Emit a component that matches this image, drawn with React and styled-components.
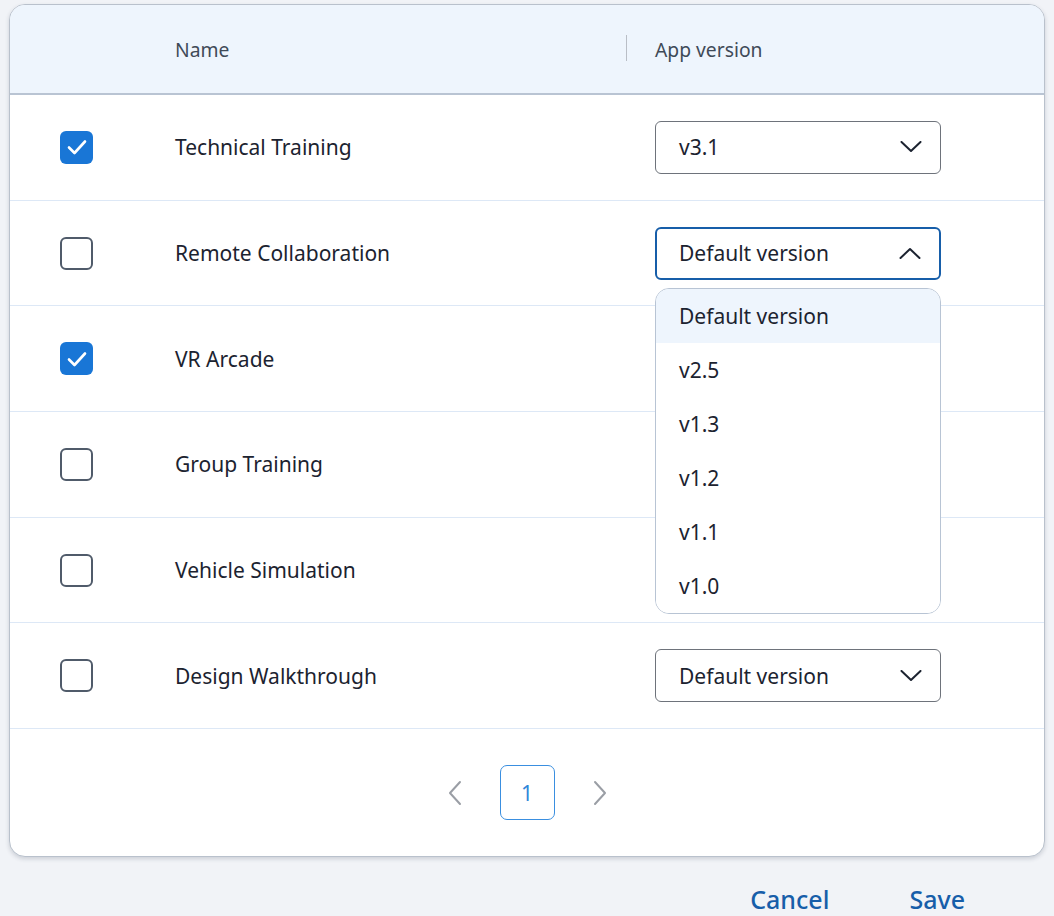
import React from "react";
import styled, { createGlobalStyle } from "styled-components";

const GlobalStyle = createGlobalStyle`
  body {
    margin: 0;
    background: #f1f3f7;
    font-family: "Noto Sans", "Open Sans", sans-serif;
  }
`;

const apps = [
  { name: "Technical Training", checked: true, version: "v3.1", select: true },
  { name: "Remote Collaboration", checked: false, version: "Default version", select: true, open: true },
  { name: "VR Arcade", checked: true, version: "Default version" },
  { name: "Group Training", checked: false, version: "Default version" },
  { name: "Vehicle Simulation", checked: false, version: "Default version" },
  { name: "Design Walkthrough", checked: false, version: "Default version", select: true },
];

const versions = ["Default version", "v2.5", "v1.3", "v1.2", "v1.1", "v1.0"];

function Chevron({ up }) {
  return (
    <svg width="22" height="12" viewBox="0 0 22 12" fill="none">
      <path
        d={up ? "M1.5 11 L11 2 L20.5 11" : "M1.5 1 L11 10 L20.5 1"}
        stroke="#1c2330"
        strokeWidth="2"
        strokeLinecap="round"
        strokeLinejoin="round"
      />
    </svg>
  );
}

function PageArrow({ left }) {
  return (
    <svg width="16" height="26" viewBox="0 0 16 26" fill="none">
      <path
        d={left ? "M13 2 L3 13 L13 24" : "M3 2 L13 13 L3 24"}
        stroke="#9a9ea5"
        strokeWidth="2"
        strokeLinecap="round"
        strokeLinejoin="round"
      />
    </svg>
  );
}

function Checkbox({ checked }) {
  return (
    <Box $checked={checked}>
      {checked && (
        <svg width="22" height="18" viewBox="0 0 22 18" fill="none">
          <path
            d="M3 9.5 L8.5 15 L19 3.5"
            stroke="#fff"
            strokeWidth="2.6"
            strokeLinecap="round"
            strokeLinejoin="round"
          />
        </svg>
      )}
    </Box>
  );
}

function VersionSelect({ value, open }) {
  return (
    <SelectWrap>
      <Select $open={open}>
        <span>{value}</span>
        <Chevron up={open} />
      </Select>
      {open && (
        <Menu>
          {versions.map((v) => (
            <MenuItem key={v} $active={v === value}>
              {v}
            </MenuItem>
          ))}
        </Menu>
      )}
    </SelectWrap>
  );
}

export default function App() {
  return (
    <Page>
      <GlobalStyle />
      <Card>
        <HeaderRow>
          <Cell />
          <HeadCell>Name</HeadCell>
          <HeadCell $divider>App version</HeadCell>
        </HeaderRow>
        {apps.map((app) => (
          <Row key={app.name}>
            <Cell>
              <Checkbox checked={app.checked} />
            </Cell>
            <NameCell>{app.name}</NameCell>
            <Cell>
              {app.select && <VersionSelect value={app.version} open={app.open} />}
            </Cell>
          </Row>
        ))}
        <Pagination>
          <PageArrow left />
          <PageBox>1</PageBox>
          <PageArrow />
        </Pagination>
      </Card>
      <Footer>
        <TextButton>Cancel</TextButton>
        <TextButton>Save</TextButton>
      </Footer>
    </Page>
  );
}

const Page = styled.div`
  padding: 4px 9px 0 9px;
`;

const Card = styled.div`
  background: #fff;
  border: 1px solid #b9c1cc;
  border-radius: 16px;
  box-shadow: 0 2px 4px rgba(40, 50, 70, 0.18);
`;

const HeaderRow = styled.div`
  display: grid;
  grid-template-columns: 165px 480px 1fr;
  align-items: center;
  height: 88px;
  background: #eef5fd;
  border-bottom: 2px solid #b9c4d3;
  border-radius: 15px 15px 0 0;
`;

const Row = styled.div`
  display: grid;
  grid-template-columns: 165px 480px 1fr;
  align-items: center;
  height: 104.7px;
  border-bottom: 1px solid #dde8f6;
`;

const Cell = styled.div`
  display: flex;
  align-items: center;

  &:first-child {
    padding-left: 50px;
  }
`;

const HeadCell = styled.div`
  position: relative;
  font-size: 19.3px;
  color: #3f4a58;

  ${({ $divider }) =>
    $divider &&
    `
    &::before {
      content: "";
      position: absolute;
      left: -29px;
      top: 50%;
      height: 26px;
      margin-top: -14px;
      border-left: 1.5px solid #b9bec6;
    }
  `}
`;

const NameCell = styled.div`
  font-size: 21px;
  color: #1c2330;
`;

const Box = styled.div`
  width: 33px;
  height: 33px;
  box-sizing: border-box;
  border-radius: 6px;
  display: flex;
  align-items: center;
  justify-content: center;
  background: ${({ $checked }) => ($checked ? "#1976d6" : "#fff")};
  border: ${({ $checked }) => ($checked ? "none" : "2px solid #505b6a")};
`;

const SelectWrap = styled.div`
  position: relative;
  width: 286px;
`;

const Select = styled.div`
  box-sizing: border-box;
  height: 53px;
  display: flex;
  align-items: center;
  justify-content: space-between;
  padding: 0 18px 0 ${({ $open }) => ($open ? "22px" : "23px")};
  border: ${({ $open }) => ($open ? "2px solid #175ea9" : "1px solid #6e737b")};
  border-radius: 6px;
  font-size: 21px;
  color: #1c2330;
  background: #fff;
`;

const Menu = styled.div`
  position: absolute;
  top: calc(100% + 8px);
  left: 0;
  right: 0;
  z-index: 2;
  background: #fff;
  border: 1.5px solid #b8c4d4;
  border-radius: 14px;
  overflow: hidden;
`;

const MenuItem = styled.div`
  height: 54px;
  display: flex;
  align-items: center;
  padding-left: 23px;
  font-size: 21px;
  color: #1c2330;
  background: ${({ $active }) => ($active ? "#eef5fd" : "#fff")};
`;

const Pagination = styled.div`
  height: 127px;
  display: flex;
  align-items: center;
  justify-content: center;
  gap: 37px;
`;

const PageBox = styled.div`
  width: 55px;
  height: 55px;
  box-sizing: border-box;
  border: 1.5px solid #3a8fe0;
  border-radius: 7px;
  display: flex;
  align-items: center;
  justify-content: center;
  font-size: 21px;
  color: #2f87d9;
`;

const Footer = styled.div`
  display: flex;
  justify-content: flex-end;
  gap: 80px;
  padding: 25px 80px 0 0;
`;

const TextButton = styled.button`
  border: none;
  background: none;
  padding: 0;
  font-family: "Noto Sans", "Open Sans", sans-serif;
  font-size: 25px;
  font-weight: 500;
  color: #175ea9;
  cursor: pointer;
`;
